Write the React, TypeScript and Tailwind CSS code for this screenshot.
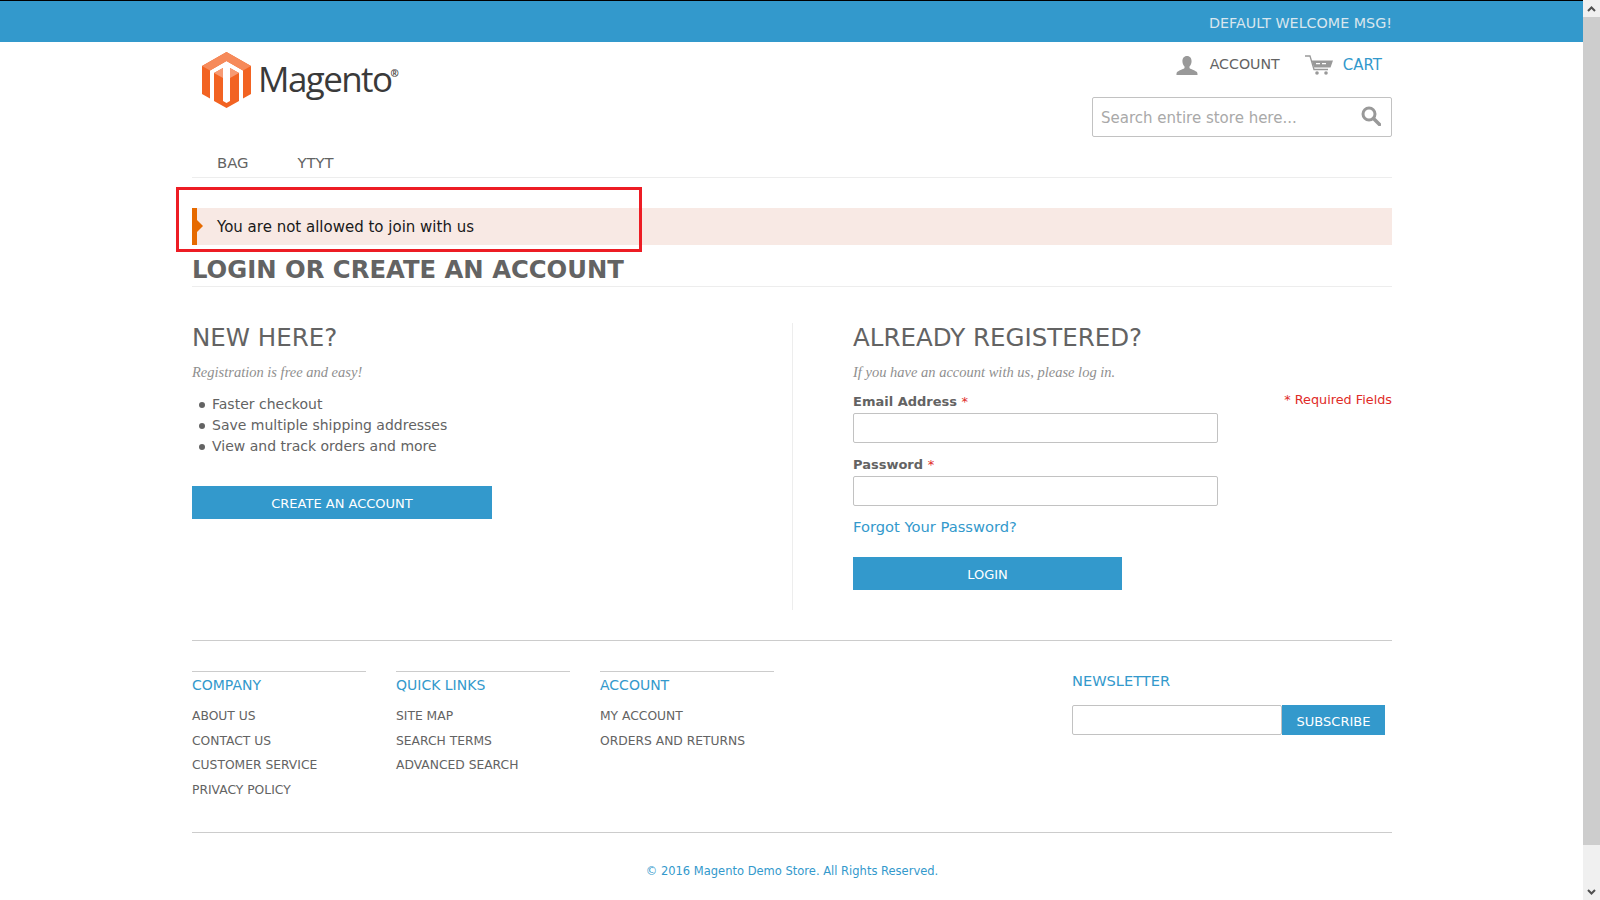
import React from 'react';

const verdana = 'font-["DejaVu_Sans",sans-serif]';

const footerColumns = [
  { title: 'COMPANY', links: ['ABOUT US', 'CONTACT US', 'CUSTOMER SERVICE', 'PRIVACY POLICY'] },
  { title: 'QUICK LINKS', links: ['SITE MAP', 'SEARCH TERMS', 'ADVANCED SEARCH'] },
  { title: 'ACCOUNT', links: ['MY ACCOUNT', 'ORDERS AND RETURNS'] },
];

const benefits = ['Faster checkout', 'Save multiple shipping addresses', 'View and track orders and more'];

const MagentoMark = () => (
  <svg width="50" height="58" viewBox="0 0 50 58">
    <polygon points="24.5,1 49,15 49,43 41,47.5 41,19.5 24.5,10 8,19.5 8,47.5 0,43 0,15" fill="#f26322" />
    <polygon points="24.5,1 49,15 41,19.5 24.5,10 8,19.5 0,15" fill="#f68a5a" />
    <polygon points="12,22 21,17 21,50 24.5,52 28,50 28,17 37,22 37,50 24.5,57 12,50" fill="#f26322" />
    <polygon points="12,22 21,17 21,27 12,22" fill="#f79a72" />
    <polygon points="37,22 28,17 28,27 37,22" fill="#f79a72" />
  </svg>
);

const UserIcon = () => (
  <svg width="22" height="19" viewBox="0 0 24 20" fill="#999" preserveAspectRatio="none">
    <path d="M12 0c3.4 0 5 2.5 5 5.5 0 2.300-1 4.300-2.300 5.500v1.500c0 1 5.300 2 7.800 4 .8.700 1 1.800 1 3.500H.5c0-1.700.2-2.800 1-3.500 2.500-2 7.800-3 7.800-4V11C8 9.800 7 7.800 7 5.500 7 2.500 8.600 0 12 0z" />
  </svg>
);

const CartIcon = () => (
  <svg width="28" height="20" viewBox="0 0 28 20" fill="none">
    <path d="M0 1h5l4 13.500h14" stroke="#999" strokeWidth="1.300" />
    <path d="M6.500 5.500h21.500l-2.500 7H9z" fill="#999" />
    <path d="M11 8h4v1.300h-4zM17 8h4v1.300h-4z" fill="#fff" />
    <circle cx="12" cy="18" r="1.800" fill="#999" />
    <circle cx="21" cy="18" r="1.800" fill="#999" />
  </svg>
);

const SearchIcon = () => (
  <svg width="20" height="20" viewBox="0 0 20 20" fill="none" stroke="#999">
    <circle cx="8" cy="8" r="6" strokeWidth="3" />
    <path d="M12.500 12.500L18.500 18.500" strokeWidth="3.500" strokeLinecap="round" />
  </svg>
);

const ScrollBar = () => (
  <div className="absolute right-0 top-0 w-[17px] h-[900px] bg-[#f0f0f0] flex flex-col items-center">
    <div className="h-[17px] flex items-center justify-center">
      <svg width="9" height="6" viewBox="0 0 9 6" fill="none" stroke="#505050" strokeWidth="2"><path d="M1 5l3.500-3.500L8 5" /></svg>
    </div>
    <div className="w-full h-[828px] bg-[#cdcdcd]" />
    <div className="mt-auto h-[17px] flex items-center justify-center">
      <svg width="9" height="6" viewBox="0 0 9 6" fill="none" stroke="#505050" strokeWidth="2"><path d="M1 1l3.500 3.500L8 1" /></svg>
    </div>
  </div>
);

export default function App() {
  return (
    <div className={`relative w-full h-[900px] overflow-hidden bg-white text-[#636363] ${verdana}`}>
      <ScrollBar />

      {/* top bar */}
      <div className="h-[42px] mr-[17px] bg-[#3399cc] border-t border-black">
        <div className="w-[1200px] ml-[192px] h-full flex items-center justify-end pt-[5px]">
          <span className="text-[14.300px] text-[#d9e6ee]">DEFAULT WELCOME MSG!</span>
        </div>
      </div>

      <div className="w-[1200px] ml-[192px]">
        {/* header */}
        <div className="h-[136px] flex justify-between border-b border-[#ededed]">
          <div className="flex flex-col justify-between">
            <div className="pl-[10px] pt-[9px] flex items-center gap-[6px]">
              <MagentoMark />
              <span className="font-['Open_Sans',sans-serif] text-[35px] leading-[58px] tracking-[-1.600px] text-[#3a3a3a] -mt-[2px]">
                Magento<sup className="text-[10px] -top-[15px] tracking-normal font-bold -ml-[1px]">®</sup>
              </span>
            </div>
            <div className="flex pl-[25px] gap-[49px] pb-[4px] text-[14.800px] text-[#636363] leading-[20px]">
              <span>BAG</span>
              <span>YTYT</span>
            </div>
          </div>
          <div className="flex flex-col items-end pt-[13px]">
            <div className="flex items-center h-[20px] pr-[10px]">
              <UserIcon />
              <span className="ml-[12px] text-[14.200px] text-[#636363]">ACCOUNT</span>
              <span className="ml-[25px]"><CartIcon /></span>
              <span className="ml-[10px] text-[15px] text-[#3399cc]">CART</span>
            </div>
            <div className="mt-[22px] w-[300px] h-[40px] rounded-[2px] border border-[#c2c2c2] flex items-center justify-between pl-[8px] pr-[10px]">
              <span className="pt-[2px] text-[15px] text-[#a9a9a9]">Search entire store here...</span>
              <span className="-mt-[2px]"><SearchIcon /></span>
            </div>
          </div>
        </div>

        {/* error message */}
        <div className="relative mt-[30px] h-[37px] bg-[#f8e9e4] flex items-center">
          <div className="absolute left-0 top-0 w-[5px] h-full bg-[#e66a00]" />
          <div className="absolute left-[5px] top-[12px] w-0 h-0 border-y-[6px] border-y-transparent border-l-[6px] border-l-[#e66a00]" />
          <span className="pl-[25px] pt-[1px] text-[15px] text-[#1a1a1a]">You are not allowed to join with us</span>
          <div className="absolute left-[-16px] top-[-21px] w-[466px] h-[65px] border-[3px] border-[#ed1c24]" />
        </div>

        {/* title */}
        <div className="h-[42px] border-b border-[#ededed]">
          <h1 className="text-[24.300px] leading-[50px] font-bold text-[#636363]">LOGIN OR CREATE AN ACCOUNT</h1>
        </div>

        {/* columns */}
        <div className="flex mt-[36px] h-[287px]">
          <div className="w-[601px] border-r border-[#ededed]">
            <h2 className="text-[24.500px] leading-[30px] text-[#636363]">NEW HERE?</h2>
            <p className="mt-[8px] font-['Liberation_Serif',serif] italic text-[14.500px] leading-[22px] text-[#8f8f8f]">Registration is free and easy!</p>
            <ul className="mt-[11px] pl-[7px] text-[14px] leading-[21px]">
              {benefits.map((item) => (
                <li key={item} className="flex items-center gap-[7px]">
                  <span className="w-[6px] h-[6px] rounded-full bg-[#636363]" />
                  {item}
                </li>
              ))}
            </ul>
            <button className="mt-[29px] w-[300px] h-[33px] pt-[2px] bg-[#3399cc] text-white text-[13px]">CREATE AN ACCOUNT</button>
          </div>
          <div className="relative flex-1 pl-[60px]">
            <h2 className="text-[24.500px] leading-[30px] text-[#636363]">ALREADY REGISTERED?</h2>
            <p className="mt-[8px] font-['Liberation_Serif',serif] italic text-[14.500px] leading-[22px] text-[#8f8f8f]">If you have an account with us, please log in.</p>
            <div className="absolute right-0 top-[68px] text-[12.800px] text-[#e02b27] leading-[18px]">* Required Fields</div>
            <label className="block mt-[9px] text-[13px] leading-[20px] font-bold">Email Address <span className="font-normal text-[#e02b27]">*</span></label>
            <div className="mt-[1px] w-[365px] h-[30px] rounded-[2px] border border-[#c2c2c2]" />
            <label className="block mt-[12px] text-[13px] leading-[20px] font-bold">Password <span className="font-normal text-[#e02b27]">*</span></label>
            <div className="mt-[1px] w-[365px] h-[30px] rounded-[2px] border border-[#c2c2c2]" />
            <div className="mt-[10px] text-[14.700px] leading-[22px] text-[#3399cc]">Forgot Your Password?</div>
            <button className="mt-[19px] w-[269px] h-[33px] pt-[2px] bg-[#3399cc] text-white text-[13px]">LOGIN</button>
          </div>
        </div>

        {/* footer */}
        <div className="mt-[30px] border-t border-[#cccccc] h-[192px] flex justify-between">
          <div className="flex gap-[30px] pt-[30px]">
            {footerColumns.map((col) => (
              <div key={col.title} className="w-[174px] border-t border-[#cccccc] pt-[3px]">
                <div className="text-[14px] leading-[20px] text-[#3399cc] mb-[9px]">{col.title}</div>
                {col.links.map((link) => (
                  <div key={link} className="text-[12.300px] leading-[24.500px] text-[#636363]">{link}</div>
                ))}
              </div>
            ))}
          </div>
          <div className="w-[320px] pt-[30px]">
            <div className="text-[14.600px] leading-[20px] text-[#3399cc]">NEWSLETTER</div>
            <div className="mt-[14px] flex">
              <div className="w-[210px] h-[30px] rounded-[2px] border border-[#c2c2c2]" />
              <button className="w-[103px] h-[30px] pt-[3px] bg-[#3399cc] text-white text-[13px]">SUBSCRIBE</button>
            </div>
          </div>
        </div>

        <div className="border-t border-[#cccccc] pt-[30px] text-center text-[11.500px] leading-[16px] text-[#3399cc]">
          © 2016 Magento Demo Store. All Rights Reserved.
        </div>
      </div>
    </div>
  );
}
